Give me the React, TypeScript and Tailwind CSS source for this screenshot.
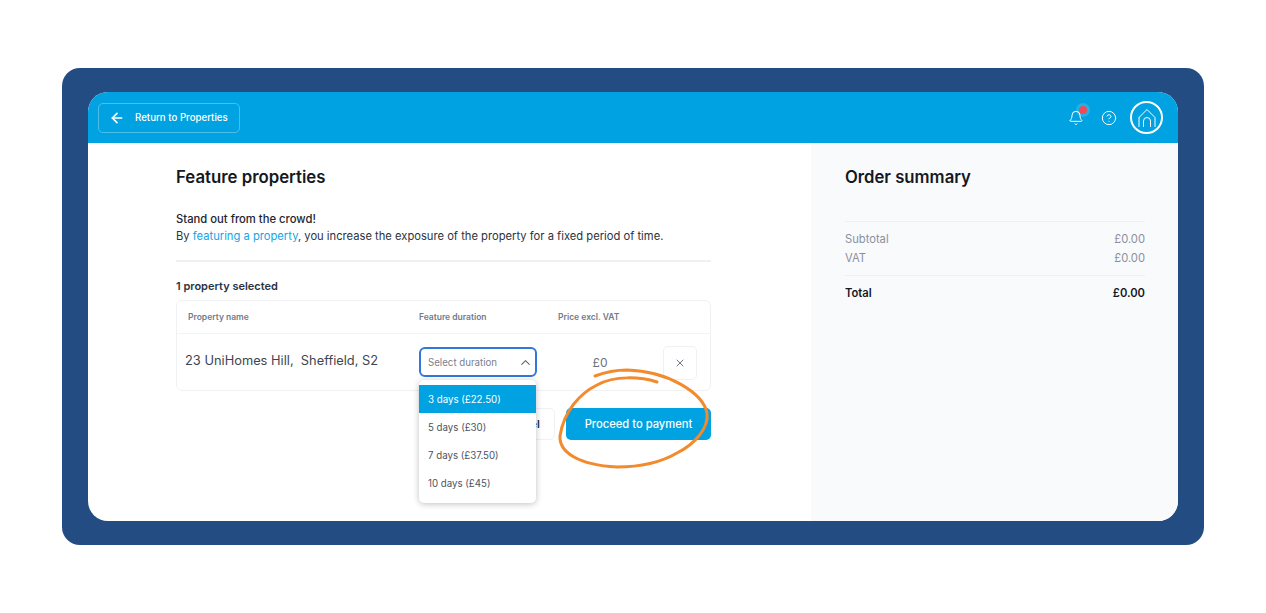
import { ArrowLeft, Bell, ChevronUp, CircleHelp, X } from 'lucide-react';

const options = ['3 days (£22.50)', '5 days (£30)', '7 days (£37.50)', '10 days (£45)'];

function HomeLogo() {
  return (
    <div className="flex h-[33px] w-[33px] items-center justify-center rounded-full border-2 border-white">
      <svg width="22" height="22" viewBox="0 0 22 22" fill="none" stroke="white" strokeWidth="1" strokeLinecap="round" strokeLinejoin="round">
        <path d="M3 10.5 11 2.5l8 8v9" />
        <path d="M3 10.5v9" />
        <path d="M7.5 19.5v-5.5a3.5 3.5 0 0 1 7 0v5.5" />
      </svg>
    </div>
  );
}

export default function App() {
  return (
    <main className="min-h-screen bg-white pt-[68px] pl-[62px] font-['Inter',sans-serif]">
      <div className="h-[477px] w-[1142px] rounded-[18px] bg-[#234c82] px-[26px] py-[24px]">
        <div className="flex h-[429px] flex-col overflow-hidden rounded-[20px] bg-white">
          <header className="flex h-[51px] shrink-0 items-center justify-between bg-[#00a2e1] pl-[10px] pr-[15px]">
            <button className="flex h-[30px] w-[142px] items-center gap-[10px] rounded-[5px] border border-white/30 pl-[10px] text-[9.7px] font-medium text-white">
              <ArrowLeft size={16} strokeWidth={2.5} />
              <span className="pt-[2px]">Return to Properties</span>
            </button>
            <div className="flex items-center">
              <div className="relative mr-[17px]">
                <Bell size={16} strokeWidth={1.5} className="text-white" />
                <span className="absolute -right-[6px] -top-[7px] h-[14px] w-[14px] rounded-full bg-white/15" />
                <span className="absolute -right-[3px] -top-[4px] h-[8px] w-[8px] rounded-full bg-[#f04b55]" />
              </div>
              <CircleHelp size={16} strokeWidth={1.5} className="mr-[13px] text-white" />
              <HomeLogo />
            </div>
          </header>

          <div className="flex min-h-0 flex-1">
            <section className="relative w-[723px] pl-[88px] pt-[24px]">
              <h1 className="text-[16.8px] font-semibold leading-[20px] text-[#14181f]">Feature properties</h1>
              <p className="mt-[24px] text-[11.25px] font-medium leading-[17px] text-[#1c2430]">Stand out from the crowd!</p>
              <p className="text-[11.2px] leading-[17px] text-[#2b3340]">
                By <span className="text-[#14a5e6]">featuring a property</span>, you increase the exposure of the property for a fixed period of time.
              </p>
              <div className="mt-[15px] h-[2px] w-[535px] bg-[#eef0f3]" />
              <p className="mt-[17px] text-[11px] font-semibold leading-[14px] text-[#2b3340]">1 property selected</p>

              <div className="mt-[7px] w-[535px] rounded-[6px] border border-[#f0f1f4]">
                <div className="flex h-[33px] items-center border-b border-[#f3f4f6] text-[8.5px] font-semibold text-[#737b8a]">
                  <span className="w-[242px] pl-[11px]">Property name</span>
                  <span className="w-[139px]">Feature duration</span>
                  <span>Price excl. VAT</span>
                </div>
                <div className="flex h-[56px] items-center">
                  <span className="w-[242px] pb-[2px] pl-[8px] text-[12.85px] leading-[16px] text-[#3e4552]">23 UniHomes Hill,&nbsp; Sheffield, S2</span>
                  <div className="flex h-[30px] w-[118px] items-center justify-between rounded-[6px] border-2 border-[#3278d8] pl-[7px] pr-[2px] text-[9.7px] text-[#7a818e]">
                    <span className="pt-[2px]">Select duration</span>
                    <ChevronUp size={15} strokeWidth={1.75} className="text-[#5d6573]" />
                  </div>
                  <span className="w-[126px] pt-[2px] text-center text-[12px] text-[#6b7280]">£0</span>
                  <div className="mt-[1px] flex h-[34px] w-[34px] items-center justify-center rounded-[5px] border border-[#f0f1f4] text-[#5d6573]">
                    <X size={12} strokeWidth={1.75} />
                  </div>
                </div>
              </div>

              <div className="mt-[17px] flex w-[535px] justify-end gap-[11px]">
                <button className="h-[32px] rounded-[5px] border border-[#f0f1f4] px-[14px] text-[11px] font-semibold text-[#2b3340]">Cancel</button>
                <button className="h-[32px] w-[145px] rounded-[5px] bg-[#00a2e1] text-[11.2px] font-medium text-white">Proceed to payment</button>
              </div>

              {/* open select menu */}
              <div className="absolute left-[331px] top-[237px] w-[117px] overflow-hidden rounded-[5px] bg-white pb-[6px] pt-[5px] shadow-[0_1px_6px_rgba(0,0,0,0.25)]">
                {options.map((option, i) => (
                  <div
                    key={option}
                    className={i === 0 ? 'flex h-[28px] items-center bg-[#00a2e1] pl-[9px] pt-[2px] text-[9.7px] text-white' : 'flex h-[28px] items-center pl-[9px] pt-[2px] text-[9.7px] text-[#4b5362]'}
                  >
                    {option}
                  </div>
                ))}
              </div>

              {/* hand drawn circle round the payment button */}
              <svg className="absolute left-[465px] top-[225px]" width="165" height="105" viewBox="0 0 165 105" fill="none">
                <path
                  d="M104 14C88 9 62 7 44 17C28 25 11 42 7 68C6 84 25 97 64 99C92 99 112 92 124 85C142 76 156 60 154 45C150 25 115 3 74 2C62 2 50 5 42 8"
                  stroke="#f28a2e"
                  strokeWidth="3"
                  strokeLinecap="round"
                  strokeLinejoin="round"
                />
              </svg>
            </section>

            <aside className="flex-1 bg-[#f9fafc] pl-[34px] pr-[33px] pt-[24px]">
              <h2 className="text-[16.7px] font-semibold leading-[20px] text-[#14181f]">Order summary</h2>
              <div className="mt-[34px] h-px bg-[#eef0f3]" />
              <div className="mt-[9px] flex justify-between text-[11.2px] leading-[16px] text-[#8a909c]">
                <span>Subtotal</span>
                <span>£0.00</span>
              </div>
              <div className="mt-[3px] flex justify-between text-[11.2px] leading-[16px] text-[#8a909c]">
                <span>VAT</span>
                <span>£0.00</span>
              </div>
              <div className="mt-[9px] h-px bg-[#eef0f3]" />
              <div className="mt-[9px] flex justify-between text-[11.2px] font-semibold leading-[16px] text-[#14181f]">
                <span>Total</span>
                <span>£0.00</span>
              </div>
            </aside>
          </div>
        </div>
      </div>
    </main>
  );
}
